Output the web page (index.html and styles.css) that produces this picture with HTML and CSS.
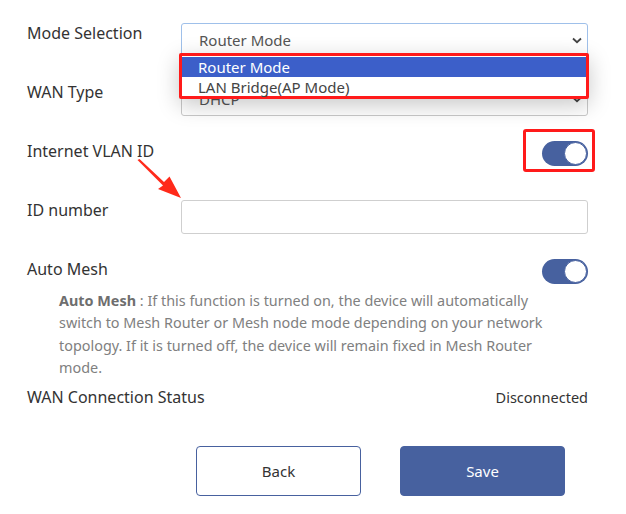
FILE: index.html
```html
<!DOCTYPE html>
<html>
<head>
<meta charset="utf-8">
<link rel="stylesheet" href="styles.css">
</head>
<body>
<div class="page">
  <div class="form">
    <div class="row">
      <div class="label">Mode Selection</div>
      <div class="select focused"><span>Router Mode</span>
        <svg class="chev" width="10" height="7" viewBox="0 0 10 7"><path d="M1 1.5 L5 5.2 L9 1.5" fill="none" stroke="#444" stroke-width="1.8"/></svg>
      </div>
    </div>
    <div class="row">
      <div class="label">WAN Type</div>
      <div class="select"><span>DHCP</span>
        <svg class="chev" width="10" height="7" viewBox="0 0 10 7"><path d="M1 1.5 L5 5.2 L9 1.5" fill="none" stroke="#444" stroke-width="1.8"/></svg>
      </div>
    </div>
    <div class="row">
      <div class="label">Internet VLAN ID</div>
      <div class="right"><div class="toggle"><div class="knob"></div></div></div>
    </div>
    <div class="row">
      <div class="label">ID number</div>
      <div class="input"></div>
    </div>
    <div class="row short">
      <div class="label">Auto Mesh</div>
      <div class="right"><div class="toggle"><div class="knob"></div></div></div>
    </div>
    <p class="desc"><b>Auto Mesh</b> : If this function is turned on, the device will automatically switch to Mesh Router or Mesh node mode depending on your network topology. If it is turned off, the device will remain fixed in Mesh Router mode.</p>
    <div class="status">
      <span class="label">WAN Connection Status</span>
      <span class="value">Disconnected</span>
    </div>
  </div>
  <div class="buttons">
    <button class="btn back">Back</button>
    <button class="btn save">Save</button>
  </div>

  <div class="dropdown">
    <div class="opt active">Router Mode</div>
    <div class="opt">LAN Bridge(AP Mode)</div>
  </div>
  <div class="mark"></div>
  <svg class="arrow" width="60" height="50" viewBox="0 0 60 50"><path d="M0.5 1 L2.5 0 L27 23 L32.5 17.5 L44 39 L21 30 L26 26.5 Z" fill="#ff2a1a"/></svg>
</div>
</body>
</html>
```
FILE: styles.css
```css
html, body { margin: 0; padding: 0; background: #fff; }
body { font-family: "Noto Sans", "Open Sans", sans-serif; color: #333; }
.page { position: relative; width: 626px; height: 514px; overflow: hidden; }
.form { padding: 23px 38px 0 27px; }
.row { display: grid; grid-template-columns: 154px 407px; height: 59px; }
.row.short { height: 33px; }
.label { font-size: 16px; line-height: 20px; color: #333; }
.select { position: relative; box-sizing: border-box; height: 34px; border: 1px solid #c9c9c9; border-radius: 3px; display: flex; align-items: center; padding-left: 17px; font-size: 15px; color: #555; }
.select.focused { border-color: #9fc0ea; }
.chev { position: absolute; right: 5px; top: 13px; }
.input { box-sizing: border-box; height: 34px; border: 1px solid #cfcfcf; border-radius: 3px; }
.right { display: flex; justify-content: flex-end; }
.toggle { width: 46px; height: 25px; border-radius: 13px; background: #47619f; position: relative; }
.knob { position: absolute; right: 1px; top: 1px; width: 23px; height: 23px; border-radius: 50%; background: #fff; box-sizing: border-box; border: 1px solid #47619f; }
.desc { margin: -2px 0 0 32px; width: 492px; font-size: 14.4px; line-height: 22.3px; color: #808080; }
.desc b { color: #6e6e6e; }
.status { display: flex; justify-content: space-between; align-items: baseline; margin-top: 8px; }
.status .value { font-size: 14.5px; color: #333; }
.buttons { display: flex; gap: 39px; padding-left: 196px; margin-top: 39px; }
.btn { width: 165px; height: 50px; border-radius: 4px; font-family: "Noto Sans", sans-serif; font-size: 15px; box-sizing: border-box; padding-bottom: 2px; }
.btn.back { background: #fff; border: 1px solid #47619f; color: #333; }
.btn.save { background: #47619f; border: 1px solid #47619f; color: #fff; }
.dropdown { position: absolute; left: 179px; top: 53px; width: 410px; height: 46px; box-sizing: border-box; border: 3px solid #ff1a1a; border-radius: 2px; background: #fff; box-shadow: 0 6px 22px rgba(0,0,0,0.22); font-size: 15px; }
.opt { height: 20px; line-height: 20px; padding-left: 16px; color: #444; }
.opt.active { background: #3c5fc9; color: #fff; margin-top: 1px; }
.mark { position: absolute; left: 523px; top: 129px; width: 72px; height: 43px; box-sizing: border-box; border: 3px solid #ff1a1a; border-radius: 3px; }
.arrow { position: absolute; left: 137px; top: 159px; }
```
